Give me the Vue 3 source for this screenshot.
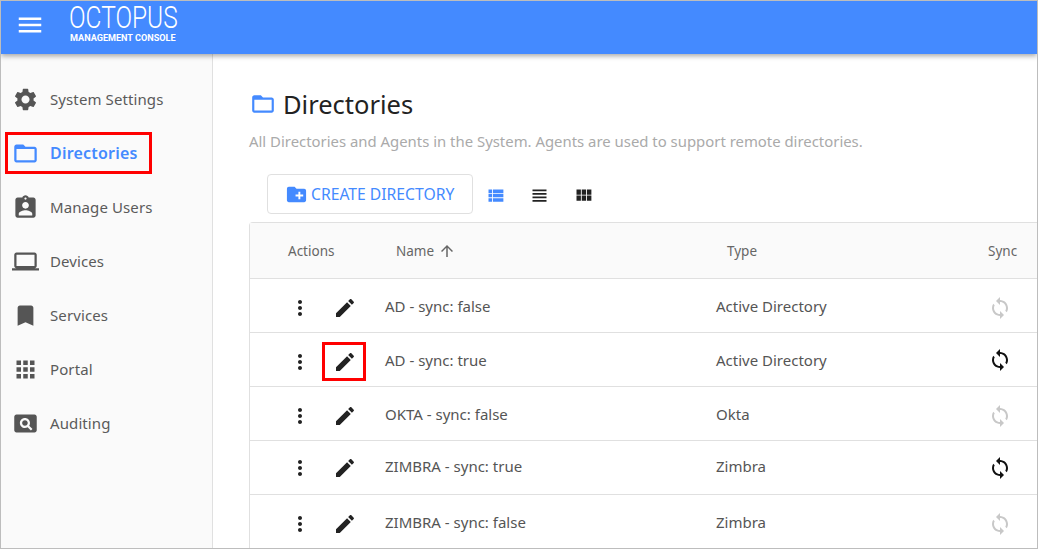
<template>
  <div class="page">
    <header class="topbar">
      <svg class="menu" viewBox="0 0 24 24"><path :d="icons.menu" /></svg>
      <div class="logo">
        <div class="logoName">OCTOPUS</div>
        <div class="logoSub">MANAGEMENT CONSOLE</div>
      </div>
    </header>

    <div class="body">
      <aside class="side">
        <div v-for="item in nav" :key="item.label" class="navItem" :class="{ active: item.active }">
          <svg class="navIcon" viewBox="0 0 24 24"><path :d="icons[item.icon]" /></svg>
          <span>{{ item.label }}</span>
        </div>
        <!-- 紅框標示 -->
        <div class="mark markNav"></div>
      </aside>

      <main class="main">
        <div class="titleRow">
          <svg class="titleIcon" viewBox="0 0 24 24"><path :d="icons.folder" /></svg>
          <h1>Directories</h1>
        </div>
        <p class="sub">All Directories and Agents in the System. Agents are used to support remote directories.</p>

        <div class="tools">
          <button class="createBtn">
            <svg viewBox="0 0 24 24"><path :d="icons.newFolder" /></svg>
            CREATE DIRECTORY
          </button>
          <svg class="viewIcon blue" viewBox="0 0 24 24"><path :d="icons.viewList" /></svg>
          <svg class="viewIcon" viewBox="0 0 24 24"><path :d="icons.viewHeadline" /></svg>
          <svg class="viewIcon" viewBox="0 0 24 24"><path :d="icons.viewModule" /></svg>
        </div>

        <div class="table">
          <div class="row head">
            <div class="hActions">Actions</div>
            <div class="hName">
              Name
              <svg viewBox="0 0 24 24"><path :d="icons.arrowUp" /></svg>
            </div>
            <div class="hType">Type</div>
            <div class="hSync">Sync</div>
          </div>
          <div v-for="(r, i) in rows" :key="i" class="row item">
            <div class="cellMore">
              <svg viewBox="0 0 24 24"><path :d="icons.more" /></svg>
            </div>
            <div class="cellEdit">
              <svg viewBox="0 0 24 24"><path :d="icons.edit" /></svg>
              <div v-if="i === 1" class="mark markEdit"></div>
            </div>
            <div class="cellName">{{ r.name }}</div>
            <div class="cellType">{{ r.type }}</div>
            <div class="cellSync" :class="{ on: r.sync }">
              <svg viewBox="0 0 24 24"><path :d="icons.sync" /></svg>
            </div>
          </div>
        </div>
      </main>
    </div>
  </div>
</template>

<script setup>
const icons = {
  menu: 'M3 18h18v-2H3v2zm0-5h18v-2H3v2zm0-7v2h18V6H3z',
  settings: 'M19.14 12.94c.04-.3.06-.61.06-.94 0-.32-.02-.64-.07-.94l2.03-1.58c.18-.14.23-.41.12-.61l-1.92-3.32c-.12-.22-.37-.29-.59-.22l-2.39.96c-.5-.38-1.03-.7-1.62-.94l-.36-2.54c-.04-.24-.24-.41-.48-.41h-3.84c-.24 0-.43.17-.47.41l-.36 2.54c-.59.24-1.13.57-1.62.94l-2.39-.96c-.22-.08-.47 0-.59.22L2.74 8.87c-.12.21-.08.47.12.61l2.03 1.58c-.05.3-.09.63-.09.94s.02.64.07.94l-2.03 1.58c-.18.14-.23.41-.12.61l1.92 3.32c.12.22.37.29.59.22l2.39-.96c.5.38 1.03.7 1.62.94l.36 2.54c.05.24.24.41.48.41h3.84c.24 0 .44-.17.47-.41l.36-2.54c.59-.24 1.13-.56 1.62-.94l2.39.96c.22.08.47 0 .59-.22l1.92-3.32c.12-.22.07-.47-.12-.61l-2.01-1.58zM12 15.6c-1.98 0-3.6-1.62-3.6-3.6s1.62-3.6 3.6-3.6 3.6 1.62 3.6 3.6-1.62 3.6-3.6 3.6z',
  folder: 'M20 6h-8l-2-2H4c-1.1 0-1.99.9-1.99 2L2 18c0 1.1.9 2 2 2h16c1.1 0 2-.9 2-2V8c0-1.1-.9-2-2-2zm0 12H4V8h16v10z',
  users: 'M19 3h-4.18C14.4 1.84 13.3 1 12 1c-1.3 0-2.4.84-2.82 2H5c-1.1 0-2 .9-2 2v14c0 1.1.9 2 2 2h14c1.1 0 2-.9 2-2V5c0-1.1-.9-2-2-2zm-7 0c.55 0 1 .45 1 1s-.45 1-1 1-1-.45-1-1 .45-1 1-1zm0 4c1.66 0 3 1.34 3 3s-1.34 3-3 3-3-1.34-3-3 1.34-3 3-3zm6 12H6v-1.4c0-2 4-3.1 6-3.1s6 1.1 6 3.1V19z',
  laptop: 'M20 18c1.1 0 1.99-.9 1.99-2L22 6c0-1.1-.9-2-2-2H4c-1.1 0-2 .9-2 2v10c0 1.1.9 2 2 2H0v2h24v-2h-4zM4 6h16v10H4V6z',
  bookmark: 'M17 3H7c-1.1 0-1.99.9-1.99 2L5 21l7-3 7 3V5c0-1.1-.9-2-2-2z',
  apps: 'M4 8h4V4H4v4zm6 12h4v-4h-4v4zm-6 0h4v-4H4v4zm0-6h4v-4H4v4zm6 0h4v-4h-4v4zm6-10v4h4V4h-4zm-6 4h4V4h-4v4zm6 6h4v-4h-4v4zm0 6h4v-4h-4v4z',
  pageview: 'M11.5 9C10.12 9 9 10.12 9 11.5s1.12 2.5 2.5 2.5 2.5-1.12 2.5-2.5S12.88 9 11.5 9zM20 4H4c-1.1 0-2 .9-2 2v12c0 1.1.9 2 2 2h16c1.1 0 2-.9 2-2V6c0-1.1-.9-2-2-2zm-3.21 14.21l-2.91-2.91c-.69.44-1.51.7-2.38.7C9 16 7 14 7 11.5S9 7 11.5 7 16 9 16 11.5c0 .88-.26 1.69-.7 2.39l2.91 2.9-1.42 1.42z',
  newFolder: 'M20 6h-8l-2-2H4c-1.11 0-1.99.89-1.99 2L2 18c0 1.11.89 2 2 2h16c1.11 0 2-.89 2-2V8c0-1.11-.89-2-2-2zm-1 8h-3v3h-2v-3h-3v-2h3V9h2v3h3v2z',
  viewList: 'M4 14h4v-4H4v4zm0 5h4v-4H4v4zM4 9h4V5H4v4zm5 5h12v-4H9v4zm0 5h12v-4H9v4zM9 5v4h12V5H9z',
  viewHeadline: 'M4 15h16v-2H4v2zm0 4h16v-2H4v2zm0-8h16V9H4v2zm0-6v2h16V5H4z',
  viewModule: 'M4 11h5V5H4v6zm0 7h5v-6H4v6zm6 0h5v-6h-5v6zm6 0h5v-6h-5v6zm-6-7h5V5h-5v6zm6-6v6h5V5h-5z',
  arrowUp: 'M4 12l1.41 1.41L11 7.83V20h2V7.83l5.58 5.59L20 12l-8-8-8 8z',
  more: 'M12 8c1.1 0 2-.9 2-2s-.9-2-2-2-2 .9-2 2 .9 2 2 2zm0 2c-1.1 0-2 .9-2 2s.9 2 2 2 2-.9 2-2-.9-2-2-2zm0 6c-1.1 0-2 .9-2 2s.9 2 2 2 2-.9 2-2-.9-2-2-2z',
  edit: 'M3 17.25V21h3.75L17.81 9.94l-3.75-3.75L3 17.25zM20.71 7.04c.39-.39.39-1.02 0-1.41l-2.34-2.34c-.39-.39-1.02-.39-1.41 0l-1.83 1.83 3.75 3.75 1.83-1.83z',
  sync: 'M12 4V1L8 5l4 4V6c3.31 0 6 2.69 6 6 0 1.01-.25 1.97-.7 2.8l1.46 1.46C19.54 15.03 20 13.57 20 12c0-4.42-3.58-8-8-8zm0 14c-3.31 0-6-2.69-6-6 0-1.01.25-1.97.7-2.8L5.24 7.74C4.46 8.97 4 10.43 4 12c0 4.42 3.58 8 8 8v3l4-4-4-4v3z',
};

const nav = [
  { label: 'System Settings', icon: 'settings' },
  { label: 'Directories', icon: 'folder', active: true },
  { label: 'Manage Users', icon: 'users' },
  { label: 'Devices', icon: 'laptop' },
  { label: 'Services', icon: 'bookmark' },
  { label: 'Portal', icon: 'apps' },
  { label: 'Auditing', icon: 'pageview' },
];

const rows = [
  { name: 'AD - sync: false', type: 'Active Directory', sync: false },
  { name: 'AD - sync: true', type: 'Active Directory', sync: true },
  { name: 'OKTA - sync: false', type: 'Okta', sync: false },
  { name: 'ZIMBRA - sync: true', type: 'Zimbra', sync: true },
  { name: 'ZIMBRA - sync: false', type: 'Zimbra', sync: false },
];
</script>

<style>
html,
body {
  margin: 0;
  background: #fff;
}
</style>

<style scoped>
.page {
  width: 1038px;
  height: 549px;
  box-sizing: border-box;
  border: 1px solid #bdbdbd;
  overflow: hidden;
  display: flex;
  flex-direction: column;
  font-family: 'Noto Sans', 'Open Sans', sans-serif;
  color: #555;
}

svg {
  display: block;
  fill: currentColor;
}

.topbar {
  height: 53px;
  flex: none;
  display: flex;
  background: #448aff;
  box-shadow: 0 2px 5px rgba(0, 0, 0, 0.35);
  position: relative;
  z-index: 2;
  color: #fff;
}
.menu {
  width: 30px;
  height: 30px;
  margin: 9px 0 0 14px;
}
.logo {
  margin: 1px 0 0 24px;
  width: 107px;
}
.logoName {
  font-family: 'Roboto', sans-serif;
  font-weight: 300;
  font-size: 31px;
  line-height: 31px;
  transform: scaleX(0.79);
  transform-origin: left center;
  white-space: nowrap;
}
.logoSub {
  font-family: 'Roboto', sans-serif;
  font-weight: 700;
  font-size: 9.1px;
  line-height: 10px;
  margin-left: 1px;
  white-space: nowrap;
}

.body {
  flex: 1;
  display: flex;
  min-height: 0;
}

.side {
  width: 212px;
  flex: none;
  box-sizing: border-box;
  background: #fafafa;
  border-right: 1px solid #e0e0e0;
  padding-top: 18px;
  position: relative;
}
.navItem {
  height: 54px;
  display: flex;
  align-items: center;
  gap: 11px;
  padding-left: 11px;
  font-size: 15px;
  letter-spacing: 0.1px;
  color: #5a5a5a;
}
.navItem.active {
  color: #448aff;
  font-size: 16px;
  font-weight: 600;
  letter-spacing: 0.2px;
}
.navIcon {
  width: 27px;
  height: 27px;
  color: #555;
}
.active .navIcon {
  color: #448aff;
}

.mark {
  position: absolute;
  box-sizing: border-box;
  border: 3px solid #f00;
}
.markNav {
  left: 4px;
  top: 78px;
  width: 147px;
  height: 42px;
}
.markEdit {
  left: -11px;
  top: -8px;
  width: 44px;
  height: 39px;
}

.main {
  flex: 1;
  min-width: 0;
  padding: 31px 0 0 36px;
}
.titleRow {
  display: flex;
  align-items: center;
  gap: 7px;
  height: 38px;
}
.titleIcon {
  width: 26px;
  height: 26px;
  margin-left: 1px;
  color: #448aff;
}
h1 {
  margin: 0;
  font-weight: 400;
  font-size: 25.5px;
  color: #222;
}
.sub {
  margin: 8px 0 0;
  font-size: 14.9px;
  line-height: 20px;
  color: #aaa;
  white-space: nowrap;
}

.tools {
  display: flex;
  align-items: center;
  margin: 23px 0 0 18px;
  height: 40px;
}
.createBtn {
  width: 206px;
  height: 40px;
  box-sizing: border-box;
  display: flex;
  align-items: center;
  gap: 3px;
  padding: 0 0 0 17px;
  background: #fff;
  border: 1px solid #e0e0e0;
  border-radius: 4px;
  font: inherit;
  font-size: 15.7px;
  color: #448aff;
  white-space: nowrap;
}
.createBtn svg {
  width: 23px;
  height: 23px;
  flex: none;
}
.viewIcon {
  width: 21px;
  height: 21px;
  margin: 2px 11px 0 12px;
  color: #222;
}
.viewIcon.blue {
  color: #448aff;
}

.table {
  margin-top: 8px;
  border: 1px solid #e0e0e0;
  border-right: 0;
  border-radius: 4px 0 0 0;
}
.row {
  display: flex;
  align-items: center;
}
.head {
  height: 55px;
  background: #fafafa;
  font-size: 13.5px;
  color: #666;
  border-bottom: 1px solid #e0e0e0;
}
.hActions {
  margin-left: 38px;
  width: 108px;
}
.hName {
  width: 331px;
  display: flex;
  align-items: center;
  gap: 4px;
}
.hName svg {
  width: 18px;
  height: 18px;
}
.hType {
  width: 261px;
}

.item {
  height: 54px;
  box-sizing: border-box;
  border-bottom: 1px solid #e0e0e0;
  font-size: 15px;
  color: #555;
}
/* 第四列在原圖略微偏上 */
.item:nth-child(5) {
  padding-bottom: 4px;
}
.cellMore {
  margin-left: 38px;
  margin-top: 5px;
  width: 45px;
  color: #222;
}
.cellMore svg,
.cellEdit svg {
  width: 24px;
  height: 24px;
}
.cellEdit {
  position: relative;
  margin-top: 5px;
  width: 52px;
  color: #222;
}
.cellName {
  width: 331px;
}
.cellType {
  width: 272px;
}
.cellSync {
  margin-top: 5px;
  color: #c8c8c8;
}
.item:nth-child(3) .cellSync {
  margin-top: 0;
}
.cellSync.on {
  color: #111;
}
.cellSync svg {
  width: 24px;
  height: 24px;
}
</style>
